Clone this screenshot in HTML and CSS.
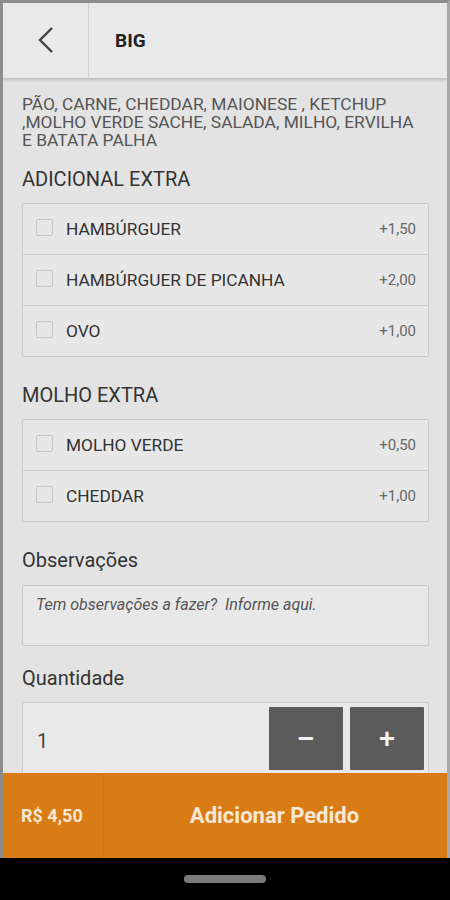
FILE: index.html
```html
<!DOCTYPE html>
<html lang="pt-BR">
<head>
    <meta charset="UTF-8">
    <meta name="viewport" content="width=device-width, initial-scale=1.0">
    <title>BIG</title>
    <link rel="stylesheet" href="styles.css">
</head>
<body>

    <div class="app">
        <header class="topbar">
            <button class="back" aria-label="Voltar">
                <svg width="18" height="28" viewBox="0 0 18 28">
                    <path d="M15 2 L3 14 L15 26" fill="none" stroke="#444" stroke-width="2.4"/>
                </svg>
            </button>
            <h1 class="title">BIG</h1>
        </header>

        <main class="content">
            <p class="desc">PÃO, CARNE, CHEDDAR, MAIONESE , KETCHUP ,MOLHO VERDE SACHE, SALADA, MILHO, ERVILHA E BATATA PALHA</p>

            <h2 class="group-title">ADICIONAL EXTRA</h2>
            <div class="options">
                <label class="option"><span class="check"></span><span class="name">HAMBÚRGUER</span><span class="price">+1,50</span></label>
                <label class="option"><span class="check"></span><span class="name">HAMBÚRGUER DE PICANHA</span><span class="price">+2,00</span></label>
                <label class="option"><span class="check"></span><span class="name">OVO</span><span class="price">+1,00</span></label>
            </div>

            <h2 class="group-title">MOLHO EXTRA</h2>
            <div class="options">
                <label class="option"><span class="check"></span><span class="name">MOLHO VERDE</span><span class="price">+0,50</span></label>
                <label class="option"><span class="check"></span><span class="name">CHEDDAR</span><span class="price">+1,00</span></label>
            </div>

            <h2 class="field-title">Observações</h2>
            <div class="notes">Tem observações a fazer?&nbsp; Informe aqui.</div>

            <h2 class="field-title qty-title">Quantidade</h2>
            <div class="qty">
                <span class="qty-value">1</span>
                <button class="qty-btn">&minus;</button>
                <button class="qty-btn">+</button>
            </div>
        </main>

        <footer class="order">
            <span class="total">R$ 4,50</span>
            <span class="add">Adicionar Pedido</span>
        </footer>
    </div>

    <div class="navbar"><span class="pill"></span></div>

</body>
</html>
```

FILE: styles.css
```css
body {
    margin: 0;
    background-color: #000;
    font-family: 'Roboto', 'Liberation Sans', sans-serif;
    width: 450px;
}

.app {
    height: 855px;
    display: flex;
    flex-direction: column;
    background-color: #e3e3e3;
    border-top: 3px solid #8c8c8c;
    border-left: 3px solid #8c8c8c;
    border-right: 3px solid #a8a8a8;
    overflow: hidden;
}

/* Top bar */
.topbar {
    height: 75px;
    flex-shrink: 0;
    display: flex;
    align-items: center;
    background-color: #e9e9e9;
    box-shadow: 0 2px 3px rgba(0, 0, 0, 0.18);
    position: relative;
    z-index: 1;
}

.back {
    width: 86px;
    height: 100%;
    border: none;
    border-right: 1px solid #cfcfcf;
    background: none;
    display: flex;
    align-items: center;
    justify-content: center;
    padding: 0 0 2px 0;
}

.title {
    margin: 0 0 0 26px;
    font-size: 19px;
    font-weight: bold;
    color: #222;
}

/* Content */
.content {
    flex: 1;
    overflow: hidden;
    padding: 17px 18px 0 19px;
}

.desc {
    margin: 0;
    padding-right: 8px;
    font-size: 17.4px;
    line-height: 18px;
    color: #555;
}

.group-title {
    margin: 19px 0 13px;
    font-size: 20px;
    font-weight: normal;
    color: #333;
    line-height: 22px;
}

.options + .group-title {
    margin-top: 27px;
}

.options {
    border: 1px solid #c9c9c9;
    border-radius: 2px;
    background-color: #e7e7e7;
}

.option {
    height: 50px;
    display: flex;
    align-items: center;
    padding: 0 12px 0 13px;
    border-top: 1px solid #cdcdcd;
}

.option:first-child {
    border-top: none;
}

.check {
    width: 15px;
    height: 15px;
    border: 1px solid #c4c4c4;
    border-radius: 2px;
    margin-top: -4px;
    flex-shrink: 0;
}

.name {
    flex: 1;
    margin-left: 13px;
    font-size: 17.3px;
    color: #333;
}

.price {
    font-size: 15px;
    color: #666;
}

.field-title {
    margin: 27px 0 14px;
    font-size: 20px;
    font-weight: normal;
    color: #333;
    line-height: 22px;
}

.qty-title {
    margin: 21px 0 13px;
}

.notes {
    height: 41px;
    border: 1px solid #c9c9c9;
    border-radius: 2px;
    background-color: #e8e8e8;
    padding: 10px 13px 8px;
    font-size: 16px;
    line-height: 18px;
    font-style: italic;
    color: #555;
}

.qty {
    height: 72px;
    display: flex;
    align-items: flex-start;
    gap: 7px;
    border: 1px solid #cdcdcd;
    border-bottom: none;
    background-color: #e9e9e9;
    padding: 4px 4px 0 14px;
}

.qty-value {
    flex: 1;
    align-self: flex-start;
    margin-top: 22px;
    font-size: 20px;
    color: #444;
}

.qty-btn {
    width: 74px;
    height: 63px;
    border: none;
    border-radius: 1px;
    background-color: #5b5b5b;
    color: #f2f2f2;
    font-size: 28px;
    font-weight: bold;
    font-family: 'Liberation Sans', sans-serif;
}

/* Footer */
.order {
    height: 85px;
    flex-shrink: 0;
    display: flex;
    align-items: center;
    background-color: #da7c15;
    color: #f6e8d4;
    font-weight: bold;
}

.total {
    width: 82px;
    height: 100%;
    display: flex;
    align-items: center;
    padding-left: 18px;
    font-size: 18px;
    border-right: 1px solid #cf7412;
}

.add {
    flex: 1;
    text-align: center;
    font-size: 22px;
    padding-right: 2px;
}

.navbar {
    height: 42px;
    display: flex;
    justify-content: center;
    align-items: center;
}

.pill {
    width: 82px;
    height: 8px;
    border-radius: 4px;
    background-color: #7b7b7b;
}
```
